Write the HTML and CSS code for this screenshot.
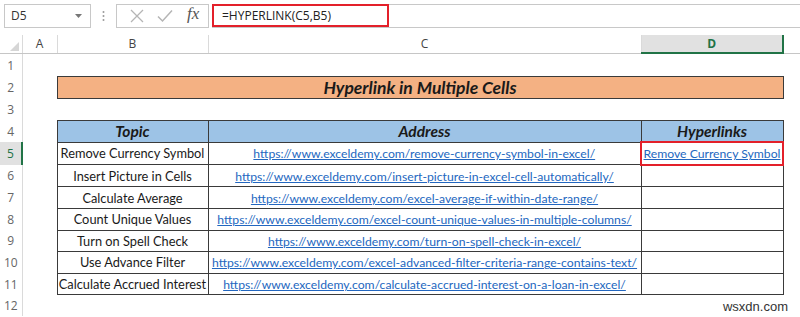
FILE: index.html
```html
<!DOCTYPE html>
<html lang="en">
<head>
    <meta charset="UTF-8">
    <title>Hyperlink in Multiple Cells</title>
    <link rel="stylesheet" href="styles.css">
</head>
<body>
    <div class="formula-bar">
        <div class="name-box">
            <span>D5</span>
            <svg class="drop" width="7" height="4" viewBox="0 0 7 4"><path d="M0 0h7L3.5 4z" fill="#777"/></svg>
        </div>
        <div class="grip">
            <svg width="3" height="12" viewBox="0 0 3 12"><circle cx="1.5" cy="2" r="1" fill="#999"/><circle cx="1.5" cy="6" r="1" fill="#999"/><circle cx="1.5" cy="10" r="1" fill="#999"/></svg>
        </div>
        <div class="fn-buttons">
            <svg width="14" height="14" viewBox="0 0 14 14"><path d="M1 1L13 13M13 1L1 13" stroke="#b5b5b5" stroke-width="1.3" fill="none"/></svg>
            <svg width="16" height="14" viewBox="0 0 16 14"><path d="M1 7.5L5.5 12L15 1.5" stroke="#b5b5b5" stroke-width="1.5" fill="none"/></svg>
            <span class="fx">fx</span>
        </div>
        <div class="formula">
            <div class="formula-text">=HYPERLINK(C5,B5)</div>
        </div>
    </div>

    <table class="sheet">
        <colgroup>
            <col class="c-row">
            <col class="c-a">
            <col class="c-b">
            <col class="c-c">
            <col class="c-d">
            <col class="c-e">
        </colgroup>
        <tr class="col-heads">
            <th class="corner"><span class="tri"></span></th>
            <th>A</th>
            <th>B</th>
            <th>C</th>
            <th class="active">D</th>
            <th></th>
        </tr>
        <tr class="r1"><th>1</th><td></td><td></td><td></td><td></td><td></td></tr>
        <tr><th>2</th><td></td><td colspan="3" class="title">Hyperlink in Multiple Cells</td><td></td></tr>
        <tr><th>3</th><td></td><td></td><td></td><td></td><td></td></tr>
        <tr><th>4</th><td></td><td class="head">Topic</td><td class="head">Address</td><td class="head">Hyperlinks</td><td></td></tr>
        <tr><th class="active">5</th><td></td><td class="box">Remove Currency Symbol</td><td class="box"><a href="#">https://www.exceldemy.com/remove-currency-symbol-in-excel/</a></td><td class="box selected"><a href="#">Remove Currency Symbol</a></td><td></td></tr>
        <tr><th>6</th><td></td><td class="box">Insert Picture in Cells</td><td class="box"><a href="#">https://www.exceldemy.com/insert-picture-in-excel-cell-automatically/</a></td><td class="box"></td><td></td></tr>
        <tr><th>7</th><td></td><td class="box">Calculate Average</td><td class="box"><a href="#">https://www.exceldemy.com/excel-average-if-within-date-range/</a></td><td class="box"></td><td></td></tr>
        <tr><th>8</th><td></td><td class="box">Count Unique Values</td><td class="box"><a href="#">https://www.exceldemy.com/excel-count-unique-values-in-multiple-columns/</a></td><td class="box"></td><td></td></tr>
        <tr><th>9</th><td></td><td class="box">Turn on Spell Check</td><td class="box"><a href="#">https://www.exceldemy.com/turn-on-spell-check-in-excel/</a></td><td class="box"></td><td></td></tr>
        <tr><th>10</th><td></td><td class="box">Use Advance Filter</td><td class="box"><a href="#">https://www.exceldemy.com/excel-advanced-filter-criteria-range-contains-text/</a></td><td class="box"></td><td></td></tr>
        <tr><th>11</th><td></td><td class="box">Calculate Accrued Interest</td><td class="box"><a href="#">https://www.exceldemy.com/calculate-accrued-interest-on-a-loan-in-excel/</a></td><td class="box"></td><td></td></tr>
        <tr><th>12</th><td></td><td></td><td></td><td></td><td></td></tr>
    </table>

    <div class="watermark">wsxdn.com</div>
</body>
</html>
```

FILE: styles.css
```css
body {
    margin: 0;
    background: #fff;
    font-family: Lato, "Liberation Sans", sans-serif;
    color: #1a1a1a;
    width: 800px;
    height: 317px;
    overflow: hidden;
    position: relative;
}

/* formula bar */
.formula-bar {
    display: flex;
    align-items: center;
    height: 35px;
    padding: 0 0 4px 4px;
    box-sizing: border-box;
}

.name-box {
    width: 87px;
    height: 24px;
    border: 1px solid #c8c8c8;
    box-sizing: border-box;
    display: flex;
    align-items: center;
    justify-content: space-between;
    padding: 0 8px 0 6px;
    font-family: "Open Sans", sans-serif;
    font-size: 12px;
    color: #333;
}

.grip {
    width: 25px;
    display: flex;
    justify-content: center;
}

.fn-buttons {
    width: 93px;
    height: 24px;
    border: 1px solid #c8c8c8;
    box-sizing: border-box;
    display: flex;
    align-items: center;
    justify-content: space-around;
    padding: 0 2px 0 6px;
}

.fx {
    font-family: "Liberation Serif", serif;
    font-style: italic;
    font-size: 17px;
    color: #555;
    margin-top: -3px;
}

.formula {
    flex: 1;
    height: 22px;
    margin-left: 3px;
    border-top: 1px solid #c8c8c8;
    border-bottom: 1px solid #c8c8c8;
    display: flex;
    align-items: center;
}

.formula-text {
    width: 177px;
    height: 23px;
    border: 2px solid #e3202a;
    box-sizing: border-box;
    padding-left: 8px;
    font-family: "Open Sans", sans-serif;
    font-size: 12px;
    line-height: 19px;
    color: #222;
}

/* sheet grid */
.sheet {
    border-collapse: collapse;
    table-layout: fixed;
    width: 800px;
}

.c-row { width: 22px; }
.c-a { width: 35px; }
.c-b { width: 151px; }
.c-c { width: 433px; }
.c-d { width: 142px; }
.c-e { width: 17px; }

.sheet th,
.sheet td {
    padding: 0;
    height: 20.6px;
    white-space: nowrap;
    overflow: hidden;
}

.sheet th {
    font-family: "Open Sans", sans-serif;
    font-weight: normal;
    font-size: 12px;
    color: #555;
    border-right: 1px solid #dadada;
}

.sheet .col-heads th {
    height: 14px;
    border-bottom: 1px solid #c6c6c6;
    color: #444;
}

.sheet .col-heads th.active {
    background: #e1e1e1;
    color: #217346;
    font-weight: bold;
    border-bottom: 2px solid #217346;
}

.corner {
    position: relative;
}

.tri {
    position: absolute;
    right: 3px;
    bottom: 2px;
    border-style: solid;
    border-width: 0 0 9px 9px;
    border-color: transparent transparent #d6d6d6 transparent;
}

.sheet .r1 th,
.sheet .r1 td {
    height: 22px;
}

.sheet tr > th:first-child {
    text-align: center;
    color: #666;
}

.sheet tr > th.active {
    background: #e1e1e1;
    color: #217346;
    border-right: 2px solid #217346;
}

.sheet td {
    text-align: center;
    font-size: 12.8px;
}

.sheet .title {
    background: #f4b183;
    border: 1px solid #3a3a3a;
    font-weight: bold;
    font-style: italic;
    font-size: 17.5px;
}

.sheet .head {
    background: #9dc3e6;
    border: 1px solid #3a3a3a;
    font-weight: bold;
    font-style: italic;
    font-size: 15.5px;
}

.sheet .box {
    border: 1px solid #3a3a3a;
}

.box a {
    color: #2367c0;
    text-decoration: underline;
    font-size: 12.2px;
}

.sheet .selected {
    border: 2px solid #e3202a;
}

.watermark {
    position: absolute;
    right: 12px;
    bottom: 3px;
    font-family: "Liberation Sans", sans-serif;
    font-size: 13px;
    color: #333;
}
```
